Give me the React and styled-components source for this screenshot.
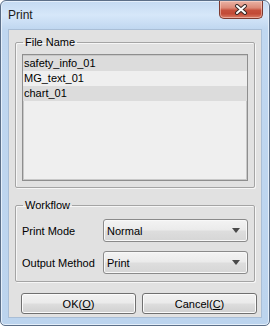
import React from "react";
import styled, { createGlobalStyle } from "styled-components";

const GlobalStyle = createGlobalStyle`
  html, body {
    margin: 0;
    padding: 0;
    background: #ffffff;
  }
  body {
    font-family: "Liberation Sans", Arial, sans-serif;
    font-size: 11px;
    color: #000;
  }
`;

const Window = styled.div`
  box-sizing: border-box;
  width: 270px;
  height: 326px;
  border: 1px solid #5c6f88;
  border-radius: 6px 6px 5px 5px;
  background: linear-gradient(to bottom, #c4daf2 0px, #d6e7f9 14px, #c0d7f0 28px, #bcd4ee 100%);
  box-shadow: inset 0 0 0 1px #e4effb;
  padding: 0 7px 7px 7px;
  display: flex;
  flex-direction: column;
`;

const TitleBar = styled.div`
  height: 28px;
  display: flex;
  align-items: flex-start;
  justify-content: space-between;
`;

const Title = styled.span`
  font-size: 12px;
  color: #1b1b1b;
  margin-top: 7px;
`;

const CloseButton = styled.div`
  width: 44px;
  height: 18px;
  box-sizing: border-box;
  border: 1px solid #7d3a30;
  border-top: none;
  border-radius: 0 0 5px 5px;
  background: linear-gradient(to bottom, #eab3a5 0%, #dc8a78 40%, #c6503c 55%, #c24a36 75%, #da7d66 100%);
  box-shadow: inset 0 0 0 1px rgba(255, 220, 210, 0.5);
  display: flex;
  align-items: center;
  justify-content: center;
  margin-right: -1px;
`;

const Client = styled.div`
  flex: 1;
  box-sizing: border-box;
  background: #e1e1e1;
  border: 1px solid #a9bed6;
  padding: 6px 6px 3px 6px;
  display: flex;
  flex-direction: column;
`;

const Group = styled.fieldset`
  margin: 0;
  padding: 0 6px ${(p) => p.$pb}px 6px;
  border: 1px solid #a4a4a4;
  border-radius: 2px;
  box-shadow: inset 1px 1px 0 #f6f6f6, 1px 1px 0 #f6f6f6;
  margin-top: ${(p) => p.$mt}px;
  min-width: 0;
`;

const Legend = styled.legend`
  padding: 0 2px;
  margin-left: 1px;
  font-size: 11px;
  line-height: 13px;
  color: #000;
`;

const ListBox = styled.div`
  margin-top: 5px;
  height: 127px;
  box-sizing: border-box;
  border: 1px solid #8e8e8e;
  box-shadow: inset 0 0 0 1px #c8c8c8;
  background: #efefef;
  padding-top: 1px;
`;

const ListRow = styled.div`
  height: 15px;
  line-height: 15px;
  padding-left: 1px;
  background: ${(p) => (p.$dark ? "#dcdcdc" : "#efefef")};
`;

const FormRows = styled.div`
  display: flex;
  flex-direction: column;
  gap: 9px;
  margin-top: 7px;
`;

const FormRow = styled.div`
  display: grid;
  grid-template-columns: 81px 1fr;
  align-items: center;
`;

const Label = styled.span`
  font-size: 11px;
`;

const Select = styled.div`
  height: 23px;
  box-sizing: border-box;
  border: 1px solid #8a8a8a;
  border-radius: 3px;
  background: linear-gradient(to bottom, #f3f3f3 0%, #ebebeb 45%, #dddddd 55%, #d6d6d6 100%);
  box-shadow: inset 0 0 0 1px #f8f8f8;
  display: flex;
  align-items: center;
  justify-content: space-between;
  padding: 0 7px 0 3px;
`;

const ButtonRow = styled.div`
  display: grid;
  grid-template-columns: 115px 115px;
  column-gap: 6px;
  margin-top: 11px;
  padding-left: 6px;
`;

const Button = styled.div`
  height: 21px;
  box-sizing: border-box;
  border: 1px solid #707070;
  border-radius: 3px;
  background: linear-gradient(to bottom, #f2f2f2 0%, #ebebeb 45%, #dddddd 55%, #cfcfcf 100%);
  box-shadow: inset 0 0 0 1px #fbfbfb;
  display: flex;
  align-items: center;
  justify-content: center;
  font-size: 11px;
`;

const Arrow = () => (
  <svg width="8" height="5" viewBox="0 0 8 5">
    <path d="M0 0h8L4 5z" fill="#4a4a4a" />
  </svg>
);

const CloseX = () => (
  <svg width="14" height="11" viewBox="0 0 14 11">
    <path d="M3 2L11 9M11 2L3 9" stroke="#3a2a28" strokeWidth="4" strokeLinecap="round" />
    <path d="M3 2L11 9M11 2L3 9" stroke="#ffffff" strokeWidth="2" strokeLinecap="round" />
  </svg>
);

const files = ["safety_info_01", "MG_text_01", "chart_01"];

export default function App() {
  return (
    <>
      <GlobalStyle />
      <Window>
        <TitleBar>
          <Title>Print</Title>
          <CloseButton>
            <CloseX />
          </CloseButton>
        </TitleBar>
        <Client>
          <Group $mt={0} $pb={6}>
            <Legend>File Name</Legend>
            <ListBox>
              {files.map((f, i) => (
                <ListRow key={f} $dark={i % 2 === 0}>
                  {f}
                </ListRow>
              ))}
            </ListBox>
          </Group>
          <Group $mt={11} $pb={7}>
            <Legend>Workflow</Legend>
            <FormRows>
              <FormRow>
                <Label>Print Mode</Label>
                <Select>
                  <span>Normal</span>
                  <Arrow />
                </Select>
              </FormRow>
              <FormRow>
                <Label>Output Method</Label>
                <Select>
                  <span>Print</span>
                  <Arrow />
                </Select>
              </FormRow>
            </FormRows>
          </Group>
          <ButtonRow>
            <Button>
              OK(<u>O</u>)
            </Button>
            <Button>
              Cancel(<u>C</u>)
            </Button>
          </ButtonRow>
        </Client>
      </Window>
    </>
  );
}
